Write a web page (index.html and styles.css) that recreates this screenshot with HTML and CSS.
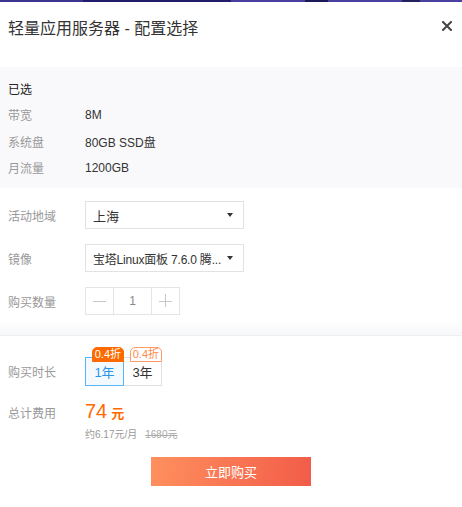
FILE: index.html
```html
<!DOCTYPE html>
<html lang="zh">
<head>
<meta charset="utf-8">
<link rel="stylesheet" href="styles.css">
</head>
<body>
<div class="topline"></div>
<div class="dialog">
  <div class="header">
    <h1 class="title">轻量应用服务器 - 配置选择</h1>
    <span class="close">
      <svg width="10" height="10" viewBox="0 0 10 10"><path d="M1 1L9 9M9 1L1 9" stroke="#444" stroke-width="2" stroke-linecap="square"/></svg>
    </span>
  </div>
  <div class="summary">
    <div class="srow head">已选</div>
    <div class="srow"><span class="lbl">带宽</span><span class="val">8M</span></div>
    <div class="srow"><span class="lbl">系统盘</span><span class="val">80GB SSD盘</span></div>
    <div class="srow"><span class="lbl">月流量</span><span class="val">1200GB</span></div>
  </div>
  <div class="form">
    <div class="frow">
      <span class="lbl">活动地域</span>
      <div class="select"><span class="stext">上海</span><span class="caret"></span></div>
    </div>
    <div class="frow">
      <span class="lbl">镜像</span>
      <div class="select"><span class="stext narrow">宝塔Linux面板 7.6.0 腾...</span><span class="caret"></span></div>
    </div>
    <div class="frow">
      <span class="lbl">购买数量</span>
      <div class="stepper">
        <span class="sbtn minus"></span>
        <span class="snum">1</span>
        <span class="sbtn plus"></span>
      </div>
    </div>
  </div>
  <div class="sep"></div>
  <div class="order">
    <div class="orow dur">
      <span class="lbl">购买时长</span>
      <div class="opts">
        <div class="opt active"><span class="badge fill">0.4折</span>1年</div>
        <div class="opt"><span class="badge line">0.4折</span>3年</div>
      </div>
    </div>
    <div class="orow total">
      <span class="lbl">总计费用</span>
      <div class="price">
        <div class="pmain"><span class="num">74</span><span class="unit">元</span></div>
        <div class="psub">约6.17元/月<s class="orig">1680元</s></div>
      </div>
    </div>
    <div class="actions">
      <button class="buy">立即购买</button>
    </div>
  </div>
</div>
</body>
</html>
```

FILE: styles.css
```css
* { box-sizing: border-box; }
html, body { margin: 0; padding: 0; background: #fff; }
body {
  width: 462px;
  font-family: "Liberation Sans", "Noto Sans CJK SC", sans-serif;
  color: #333;
  font-size: 12px;
}
.topline {
  height: 2px;
  background: linear-gradient(90deg, #3b358f 0 18%, #221d6b 18% 50%, #4a3f9e 50% 66%, #1c1a55 66% 71%, #4a40a0 71% 87%, #23205e 87% 91%, #4a40a0 91%);
}
.dialog { width: 462px; }
.header {
  height: 65px;
  display: flex;
  align-items: flex-start;
  justify-content: space-between;
  padding: 17px 10px 0 8px;
}
.title {
  margin: 0;
  font-size: 16px;
  font-weight: normal;
  color: #333;
  line-height: 20px;
}
.close { display: flex; padding-top: 2px; }
.summary {
  background: #f9f9fb;
  padding: 8px 8px 7px;
}
.srow {
  height: 26.5px;
  display: flex;
  align-items: center;
}
.srow.head { color: #222; font-size: 12px; }
.lbl { width: 77px; flex: none; color: #999; font-size: 12px; }
.val { color: #333; font-size: 12px; }
.form { padding: 13px 8px 5px; }
.frow {
  display: flex;
  align-items: center;
  height: 28px;
  margin-bottom: 15px;
}
.frow:last-child { margin-bottom: 0; }
.select {
  width: 159px;
  height: 28px;
  border: 1px solid #e2e2e2;
  display: flex;
  align-items: center;
  padding: 0 10px 0 7px;
  gap: 6px;
}
.stext {
  flex: 1;
  min-width: 0;
  white-space: nowrap;
  font-size: 13px;
  color: #333;
}
.stext.narrow { font-size: 12px; letter-spacing: -0.2px; }
.caret {
  width: 0; height: 0;
  border-left: 3.5px solid transparent;
  border-right: 3.5px solid transparent;
  border-top: 4px solid #333;
  flex: none;
}
.stepper {
  display: flex;
  height: 28px;
  border: 1px solid #e5e5e5;
}
.sbtn {
  width: 28px;
  position: relative;
}
.sbtn.plus { border-left: 1px solid #e5e5e5; }
.sbtn.minus { border-right: 1px solid #e5e5e5; }
.sbtn::before {
  content: "";
  position: absolute;
  left: 7px; right: 7px; top: 12.5px;
  height: 1px;
  background: #c8c8c8;
}
.sbtn.plus::after {
  content: "";
  position: absolute;
  top: 6px; bottom: 7px; left: 13px;
  width: 1px;
  background: #c8c8c8;
}
.snum {
  width: 37px;
  display: flex;
  align-items: center;
  justify-content: center;
  color: #888;
  font-size: 12px;
}
.sep {
  height: 16px;
  background: linear-gradient(#fff, #f6f7f9);
  border-bottom: 1px solid #eceef1;
}
.order { padding: 13px 8px 0; }
.orow { display: flex; align-items: center; }
.dur { padding-top: 8px; }
.opts { display: flex; }
.opt {
  position: relative;
  width: 39px;
  height: 29px;
  border: 1px solid #e0e0e0;
  display: flex;
  align-items: center;
  justify-content: center;
  font-size: 13px;
  color: #333;
}
.opt + .opt { border-left: none; width: 38px; }
.opt.active {
  border: 1px solid #5ab4f5;
  background: #f2f9ff;
  color: #2a95e8;
}
.badge {
  position: absolute;
  right: -1px;
  top: -11px;
  height: 15px;
  padding: 0 2px;
  font-size: 11px;
  line-height: 13px;
  border-radius: 5px 5px 0 0;
  white-space: nowrap;
}
.badge.fill { background: #ff6a00; color: #fff; border: 1px solid #ff6a00; }
.badge.line { background: #fff; color: #ff8a4d; border: 1px solid #ff9a66; }
.total { align-items: flex-start; margin-top: 11px; }
.total .lbl { padding-top: 7px; }
.pmain { color: #ff6a00; display: flex; align-items: baseline; gap: 4px; height: 28px; }
.num { font-size: 20px; line-height: 28px; }
.unit { font-size: 13px; font-weight: bold; }
.psub { color: #999; font-size: 10px; display: flex; gap: 8px; margin-top: 1px; }
.orig { color: #aaa; }
.actions {
  display: flex;
  justify-content: center;
  padding-top: 16px;
}
.buy {
  width: 160px;
  height: 29px;
  border: none;
  border-radius: 0;
  background: linear-gradient(100deg, #ff905e, #f25c49);
  color: #fff;
  font-family: "Liberation Sans", "Noto Sans CJK SC", sans-serif;
  font-size: 13px;
}
```
